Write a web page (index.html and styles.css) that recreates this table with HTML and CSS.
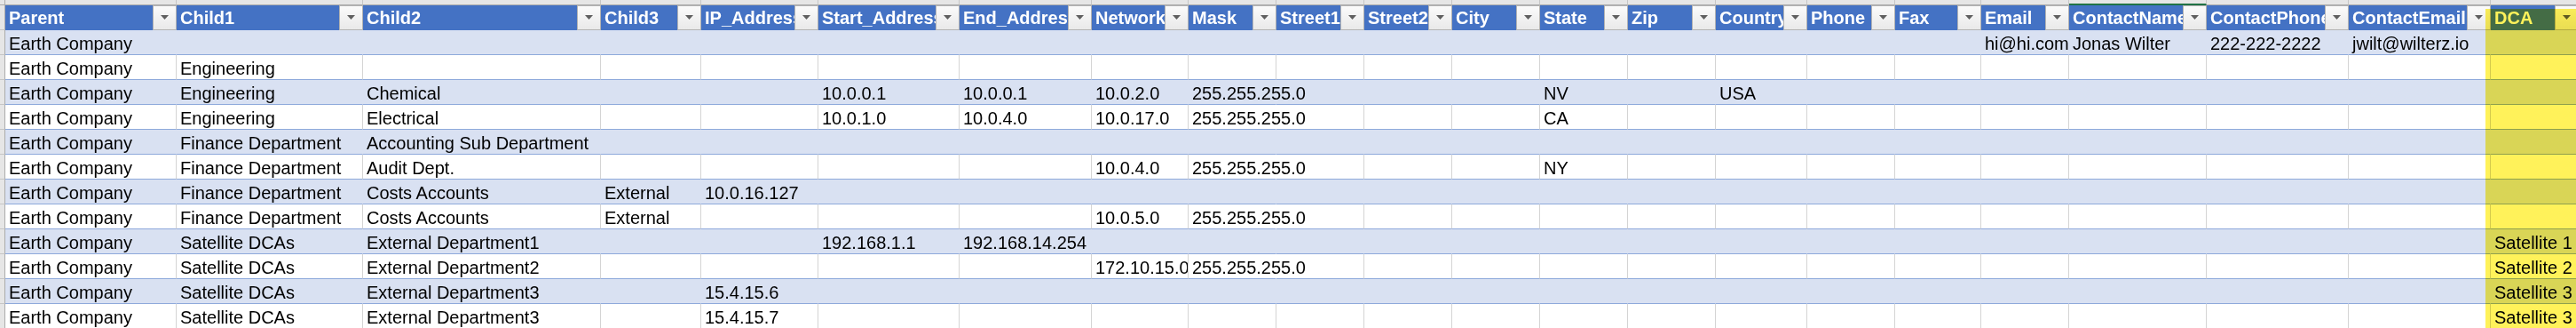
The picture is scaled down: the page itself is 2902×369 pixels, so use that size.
FILE: index.html
```html
<!DOCTYPE html>
<html>
<head>
<meta charset="utf-8">
<title>Sheet</title>
<link rel="stylesheet" href="styles.css">
</head>
<body>
<div class="sheet">
  <div class="row colheads">
    <div></div><div></div><div></div><div></div><div></div><div></div><div></div><div></div><div></div><div></div><div></div><div></div><div></div><div></div><div></div><div></div><div></div><div></div><div></div><div class="sel"></div><div></div><div></div><div></div>
  </div>
  <div class="row hdr">
    <div class="rh"></div>
    <div class="h"><span>Parent</span><i class="btn"><svg width="9" height="5" viewBox="0 0 9 5"><polygon points="0,0 9,0 4.5,5" fill="#5f5f5f"/></svg></i></div>
    <div class="h"><span>Child1</span><i class="btn"><svg width="9" height="5" viewBox="0 0 9 5"><polygon points="0,0 9,0 4.5,5" fill="#5f5f5f"/></svg></i></div>
    <div class="h"><span>Child2</span><i class="btn"><svg width="9" height="5" viewBox="0 0 9 5"><polygon points="0,0 9,0 4.5,5" fill="#5f5f5f"/></svg></i></div>
    <div class="h"><span>Child3</span><i class="btn"><svg width="9" height="5" viewBox="0 0 9 5"><polygon points="0,0 9,0 4.5,5" fill="#5f5f5f"/></svg></i></div>
    <div class="h"><span>IP_Address</span><i class="btn"><svg width="9" height="5" viewBox="0 0 9 5"><polygon points="0,0 9,0 4.5,5" fill="#5f5f5f"/></svg></i></div>
    <div class="h"><span>Start_Address</span><i class="btn"><svg width="9" height="5" viewBox="0 0 9 5"><polygon points="0,0 9,0 4.5,5" fill="#5f5f5f"/></svg></i></div>
    <div class="h"><span>End_Address</span><i class="btn"><svg width="9" height="5" viewBox="0 0 9 5"><polygon points="0,0 9,0 4.5,5" fill="#5f5f5f"/></svg></i></div>
    <div class="h"><span>Network</span><i class="btn"><svg width="9" height="5" viewBox="0 0 9 5"><polygon points="0,0 9,0 4.5,5" fill="#5f5f5f"/></svg></i></div>
    <div class="h"><span>Mask</span><i class="btn"><svg width="9" height="5" viewBox="0 0 9 5"><polygon points="0,0 9,0 4.5,5" fill="#5f5f5f"/></svg></i></div>
    <div class="h"><span>Street1</span><i class="btn"><svg width="9" height="5" viewBox="0 0 9 5"><polygon points="0,0 9,0 4.5,5" fill="#5f5f5f"/></svg></i></div>
    <div class="h"><span>Street2</span><i class="btn"><svg width="9" height="5" viewBox="0 0 9 5"><polygon points="0,0 9,0 4.5,5" fill="#5f5f5f"/></svg></i></div>
    <div class="h"><span>City</span><i class="btn"><svg width="9" height="5" viewBox="0 0 9 5"><polygon points="0,0 9,0 4.5,5" fill="#5f5f5f"/></svg></i></div>
    <div class="h"><span>State</span><i class="btn"><svg width="9" height="5" viewBox="0 0 9 5"><polygon points="0,0 9,0 4.5,5" fill="#5f5f5f"/></svg></i></div>
    <div class="h"><span>Zip</span><i class="btn"><svg width="9" height="5" viewBox="0 0 9 5"><polygon points="0,0 9,0 4.5,5" fill="#5f5f5f"/></svg></i></div>
    <div class="h"><span>Country</span><i class="btn"><svg width="9" height="5" viewBox="0 0 9 5"><polygon points="0,0 9,0 4.5,5" fill="#5f5f5f"/></svg></i></div>
    <div class="h"><span>Phone</span><i class="btn"><svg width="9" height="5" viewBox="0 0 9 5"><polygon points="0,0 9,0 4.5,5" fill="#5f5f5f"/></svg></i></div>
    <div class="h"><span>Fax</span><i class="btn"><svg width="9" height="5" viewBox="0 0 9 5"><polygon points="0,0 9,0 4.5,5" fill="#5f5f5f"/></svg></i></div>
    <div class="h"><span>Email</span><i class="btn"><svg width="9" height="5" viewBox="0 0 9 5"><polygon points="0,0 9,0 4.5,5" fill="#5f5f5f"/></svg></i></div>
    <div class="h"><span>ContactName</span><i class="btn"><svg width="9" height="5" viewBox="0 0 9 5"><polygon points="0,0 9,0 4.5,5" fill="#5f5f5f"/></svg></i></div>
    <div class="h"><span>ContactPhone</span><i class="btn"><svg width="9" height="5" viewBox="0 0 9 5"><polygon points="0,0 9,0 4.5,5" fill="#5f5f5f"/></svg></i></div>
    <div class="h"><span>ContactEmail</span><i class="btn"><svg width="9" height="5" viewBox="0 0 9 5"><polygon points="0,0 9,0 4.5,5" fill="#5f5f5f"/></svg></i></div>
    <div class="h"><span>DCA</span><i class="btn"><svg width="9" height="5" viewBox="0 0 9 5"><polygon points="0,0 9,0 4.5,5" fill="#5f5f5f"/></svg></i></div>
  </div>

  <div class="row r b">
    <div class="rh"></div>
    <div class="c">Earth Company</div><div class="c"></div><div class="c"></div><div class="c"></div><div class="c"></div><div class="c"></div><div class="c"></div><div class="c"></div><div class="c"></div><div class="c"></div><div class="c"></div><div class="c"></div><div class="c"></div><div class="c"></div><div class="c"></div><div class="c"></div><div class="c"></div>
    <div class="c">hi@hi.com</div><div class="c">Jonas Wilter</div><div class="c">222-222-2222</div><div class="c">jwilt@wilterz.io</div><div class="c"></div>
  </div>
  <div class="row r">
    <div class="rh"></div>
    <div class="c">Earth Company</div><div class="c">Engineering</div><div class="c"></div><div class="c"></div><div class="c"></div><div class="c"></div><div class="c"></div><div class="c"></div><div class="c"></div><div class="c"></div><div class="c"></div><div class="c"></div><div class="c"></div><div class="c"></div><div class="c"></div><div class="c"></div><div class="c"></div><div class="c"></div><div class="c"></div><div class="c"></div><div class="c"></div><div class="c"></div>
  </div>
  <div class="row r b">
    <div class="rh"></div>
    <div class="c">Earth Company</div><div class="c">Engineering</div><div class="c">Chemical</div><div class="c"></div><div class="c"></div><div class="c">10.0.0.1</div><div class="c">10.0.0.1</div><div class="c">10.0.2.0</div><div class="c ov">255.255.255.0</div><div class="c"></div><div class="c"></div><div class="c"></div><div class="c">NV</div><div class="c"></div><div class="c">USA</div><div class="c"></div><div class="c"></div><div class="c"></div><div class="c"></div><div class="c"></div><div class="c"></div><div class="c"></div>
  </div>
  <div class="row r">
    <div class="rh"></div>
    <div class="c">Earth Company</div><div class="c">Engineering</div><div class="c">Electrical</div><div class="c"></div><div class="c"></div><div class="c">10.0.1.0</div><div class="c">10.0.4.0</div><div class="c">10.0.17.0</div><div class="c ov">255.255.255.0</div><div class="c"></div><div class="c"></div><div class="c"></div><div class="c">CA</div><div class="c"></div><div class="c"></div><div class="c"></div><div class="c"></div><div class="c"></div><div class="c"></div><div class="c"></div><div class="c"></div><div class="c"></div>
  </div>
  <div class="row r b">
    <div class="rh"></div>
    <div class="c">Earth Company</div><div class="c">Finance Department</div><div class="c">Accounting Sub Department</div><div class="c"></div><div class="c"></div><div class="c"></div><div class="c"></div><div class="c"></div><div class="c"></div><div class="c"></div><div class="c"></div><div class="c"></div><div class="c"></div><div class="c"></div><div class="c"></div><div class="c"></div><div class="c"></div><div class="c"></div><div class="c"></div><div class="c"></div><div class="c"></div><div class="c"></div>
  </div>
  <div class="row r">
    <div class="rh"></div>
    <div class="c">Earth Company</div><div class="c">Finance Department</div><div class="c">Audit Dept.</div><div class="c"></div><div class="c"></div><div class="c"></div><div class="c"></div><div class="c">10.0.4.0</div><div class="c ov">255.255.255.0</div><div class="c"></div><div class="c"></div><div class="c"></div><div class="c">NY</div><div class="c"></div><div class="c"></div><div class="c"></div><div class="c"></div><div class="c"></div><div class="c"></div><div class="c"></div><div class="c"></div><div class="c"></div>
  </div>
  <div class="row r b">
    <div class="rh"></div>
    <div class="c">Earth Company</div><div class="c">Finance Department</div><div class="c">Costs Accounts</div><div class="c">External</div><div class="c">10.0.16.127</div><div class="c"></div><div class="c"></div><div class="c"></div><div class="c"></div><div class="c"></div><div class="c"></div><div class="c"></div><div class="c"></div><div class="c"></div><div class="c"></div><div class="c"></div><div class="c"></div><div class="c"></div><div class="c"></div><div class="c"></div><div class="c"></div><div class="c"></div>
  </div>
  <div class="row r">
    <div class="rh"></div>
    <div class="c">Earth Company</div><div class="c">Finance Department</div><div class="c">Costs Accounts</div><div class="c">External</div><div class="c"></div><div class="c"></div><div class="c"></div><div class="c">10.0.5.0</div><div class="c ov">255.255.255.0</div><div class="c"></div><div class="c"></div><div class="c"></div><div class="c"></div><div class="c"></div><div class="c"></div><div class="c"></div><div class="c"></div><div class="c"></div><div class="c"></div><div class="c"></div><div class="c"></div><div class="c"></div>
  </div>
  <div class="row r b">
    <div class="rh"></div>
    <div class="c">Earth Company</div><div class="c">Satellite DCAs</div><div class="c">External Department1</div><div class="c"></div><div class="c"></div><div class="c">192.168.1.1</div><div class="c">192.168.14.254</div><div class="c"></div><div class="c"></div><div class="c"></div><div class="c"></div><div class="c"></div><div class="c"></div><div class="c"></div><div class="c"></div><div class="c"></div><div class="c"></div><div class="c"></div><div class="c"></div><div class="c"></div><div class="c"></div><div class="c">Satellite 1</div>
  </div>
  <div class="row r">
    <div class="rh"></div>
    <div class="c">Earth Company</div><div class="c">Satellite DCAs</div><div class="c">External Department2</div><div class="c"></div><div class="c"></div><div class="c"></div><div class="c"></div><div class="c">172.10.15.0</div><div class="c ov">255.255.255.0</div><div class="c"></div><div class="c"></div><div class="c"></div><div class="c"></div><div class="c"></div><div class="c"></div><div class="c"></div><div class="c"></div><div class="c"></div><div class="c"></div><div class="c"></div><div class="c"></div><div class="c">Satellite 2</div>
  </div>
  <div class="row r b">
    <div class="rh"></div>
    <div class="c">Earth Company</div><div class="c">Satellite DCAs</div><div class="c">External Department3</div><div class="c"></div><div class="c">15.4.15.6</div><div class="c"></div><div class="c"></div><div class="c"></div><div class="c"></div><div class="c"></div><div class="c"></div><div class="c"></div><div class="c"></div><div class="c"></div><div class="c"></div><div class="c"></div><div class="c"></div><div class="c"></div><div class="c"></div><div class="c"></div><div class="c"></div><div class="c">Satellite 3</div>
  </div>
  <div class="row r">
    <div class="rh"></div>
    <div class="c">Earth Company</div><div class="c">Satellite DCAs</div><div class="c">External Department3</div><div class="c"></div><div class="c">15.4.15.7</div><div class="c"></div><div class="c"></div><div class="c"></div><div class="c"></div><div class="c"></div><div class="c"></div><div class="c"></div><div class="c"></div><div class="c"></div><div class="c"></div><div class="c"></div><div class="c"></div><div class="c"></div><div class="c"></div><div class="c"></div><div class="c"></div><div class="c">Satellite 3</div>
  </div>

  <div class="highlight"></div>
</div>
</body>
</html>
```

FILE: styles.css
```css
html, body {
  margin: 0;
  padding: 0;
  background: #ffffff;
  overflow: hidden;
}

body {
  font-family: "Liberation Sans", Arial, sans-serif;
  color: #000000;
}

.sheet {
  position: relative;
  width: max-content;
}

.row {
  display: grid;
  grid-template-columns: 6px 193px 210px 268px 113px 132px 159px 149px 109px 99px 99px 99px 99px 99px 99px 103px 99px 97px 99px 155px 160px 160px 99px;
}

/* column heading strip (cut off at top) */
.colheads {
  height: 6px;
}
.colheads > div {
  box-sizing: border-box;
  background: #e6e6e6;
  border-right: 1px solid #c6c6c6;
  border-bottom: 1px solid #ababab;
}
.colheads > div:first-child {
  border-right-color: #ababab;
}
.colheads > .sel {
  border-bottom: 2px solid #217346;
}

/* row heading gutter */
.rh {
  box-sizing: border-box;
  background: #e6e6e6;
  border-right: 1px solid #ababab;
  border-bottom: 1px solid #c6c6c6;
}

/* table header */
.hdr {
  height: 28px;
}
.h {
  display: flex;
  min-width: 0;
  overflow: hidden;
  background: #4472c4;
  color: #ffffff;
  font-weight: bold;
  font-size: 20px;
  line-height: 28px;
}
.h span {
  flex: 1 1 auto;
  min-width: 0;
  overflow: hidden;
  white-space: nowrap;
  padding-left: 4px;
}
.btn {
  flex: none;
  width: 27px;
  box-sizing: border-box;
  border: 1px solid #b3b3b3;
  background: linear-gradient(#fbfbfb, #e9e9e9);
  display: flex;
  align-items: center;
  justify-content: center;
}
.btn svg {
  display: block;
  margin-top: -1px;
}

/* data rows */
.r {
  height: 28px;
}
.r.b {
  background: #d9e1f2;
}
.c {
  box-sizing: border-box;
  min-width: 0;
  border-bottom: 1px solid #8ea9db;
  border-right: 1px solid #d4d4d4;
  padding: 4px 0 0 4px;
  font-size: 20px;
  line-height: 22px;
  white-space: nowrap;
  overflow: hidden;
}
.r.b > .c {
  border-right-color: transparent;
}
.c.ov {
  overflow: visible;
  border-right-color: transparent;
}

/* yellow marker highlight over the DCA column */
.highlight {
  position: absolute;
  left: 2800px;
  top: 10px;
  width: 110px;
  bottom: 0;
  background: #fff25a;
  mix-blend-mode: multiply;
  pointer-events: none;
}
```
